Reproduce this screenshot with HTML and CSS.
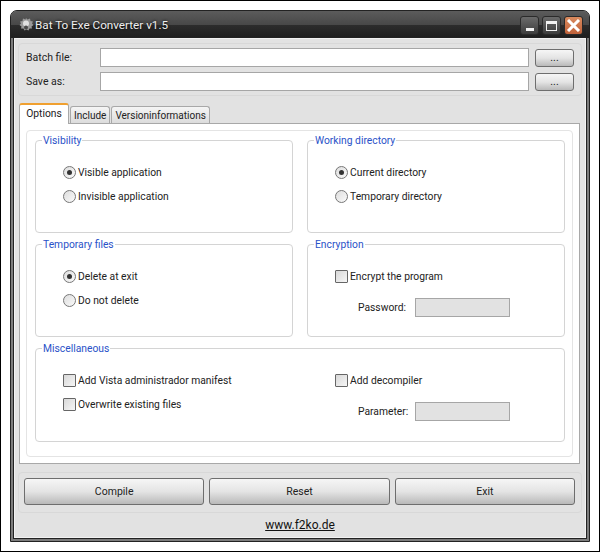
FILE: index.html
```html
<!DOCTYPE html>
<html lang="en">
<head>
    <meta charset="UTF-8">
    <title>Bat To Exe Converter v1.5</title>
    <link rel="stylesheet" href="styles.css">
</head>
<body>
    <div class="window">
        <div class="titlebar">
            <svg class="app-icon" width="16" height="15" viewBox="0 0 16 15">
                <path d="M8 1l1.500 1.500 2.500-1 .5 2.500 2.500.5-1 2 1.500 1.500-2 1.500.5 2-2.500 0-1 2-2-1-2 1-1-2-2.500 0 .5-2-2-1.500 1.500-1.500-1-2 2.500-.5.5-2.500 2.500 1z" fill="#9a9a9a"/>
                <circle cx="8" cy="6.500" r="3" fill="#e0e0e0"/>
                <circle cx="8" cy="10.500" r="2" fill="#4a4a4a"/>
            </svg>
            <span class="title">Bat To Exe Converter v1.5</span>
            <div class="win-buttons">
                <div class="win-btn"><span class="min-glyph"></span></div>
                <div class="win-btn"><span class="max-glyph"></span></div>
                <div class="win-btn close">
                    <svg width="15" height="13" viewBox="0 0 15 13">
                        <path d="M2 1l11 11M13 1L2 12" stroke="#fff" stroke-width="3" fill="none"/>
                    </svg>
                </div>
            </div>
        </div>

        <div class="content">
            <div class="group files">
                <div class="file-row">
                    <label class="file-label">Batch file:</label>
                    <div class="text-box"></div>
                    <button class="btn small">...</button>
                </div>
                <div class="file-row">
                    <label class="file-label">Save as:</label>
                    <div class="text-box"></div>
                    <button class="btn small">...</button>
                </div>
            </div>

            <div class="tabs">
                <div class="tab active">Options</div>
                <div class="tab">Include</div>
                <div class="tab">Versioninformations</div>
            </div>

            <div class="tab-panel">
                <div class="panel-inner">
                    <fieldset class="box">
                        <legend>Visibility</legend>
                        <div class="opt"><span class="radio checked"></span>Visible application</div>
                        <div class="opt"><span class="radio"></span>Invisible application</div>
                    </fieldset>
                    <fieldset class="box">
                        <legend>Working directory</legend>
                        <div class="opt"><span class="radio checked"></span>Current directory</div>
                        <div class="opt"><span class="radio"></span>Temporary directory</div>
                    </fieldset>
                    <fieldset class="box">
                        <legend>Temporary files</legend>
                        <div class="opt"><span class="radio checked"></span>Delete at exit</div>
                        <div class="opt"><span class="radio"></span>Do not delete</div>
                    </fieldset>
                    <fieldset class="box">
                        <legend>Encryption</legend>
                        <div class="opt"><span class="check"></span>Encrypt the program</div>
                        <div class="param-row"><span class="param-label">Password:</span><div class="text-box disabled"></div></div>
                    </fieldset>
                    <fieldset class="box wide">
                        <legend>Miscellaneous</legend>
                        <div class="misc-cols">
                            <div>
                                <div class="opt"><span class="check"></span>Add Vista administrador manifest</div>
                                <div class="opt"><span class="check"></span>Overwrite existing files</div>
                            </div>
                            <div>
                                <div class="opt"><span class="check"></span>Add decompiler</div>
                                <div class="param-row"><span class="param-label">Parameter:</span><div class="text-box disabled"></div></div>
                            </div>
                        </div>
                    </fieldset>
                </div>
            </div>

            <div class="group actions">
                <button class="btn">Compile</button>
                <button class="btn">Reset</button>
                <button class="btn">Exit</button>
            </div>

            <div class="footer"><a href="#">www.f2ko.de</a></div>
        </div>
    </div>
</body>
</html>
```

FILE: styles.css
```css
* {
    box-sizing: border-box;
}

html, body {
    margin: 0;
    height: 552px;
}

body {
    font-family: Roboto, Arial, sans-serif;
    font-size: 10.3px;
    color: #222;
    background: #fff;
    border: 1px solid #000;
    padding: 9px;
    overflow: hidden;
}

.window {
    width: 580px;
    height: 532px;
    background: #7c7c7c;
    border-radius: 7px 7px 0 0;
    border: 1px solid #222;
    display: flex;
    flex-direction: column;
}

.titlebar {
    height: 27px;
    flex: none;
    display: flex;
    align-items: center;
    padding: 0 6px 0 7px;
    border-radius: 6px 6px 0 0;
    background: linear-gradient(#5c5c5c, #484848 50%, #2c2c2c 52%, #1e1e1e);
}

.app-icon {
    margin-right: 1px;
}

.title {
    color: #eee;
    font-size: 11.7px;
    padding-top: 1px;
    text-shadow: 0 0 3px #000;
}

.win-buttons {
    margin-left: auto;
    display: flex;
    gap: 3px;
    align-self: flex-start;
    padding-top: 5px;
}

.win-btn {
    width: 19px;
    height: 19px;
    border: 1px solid #2a2a2a;
    border-radius: 3px;
    background: linear-gradient(#6a6a6a, #3c3c3c);
    display: flex;
    align-items: center;
    justify-content: center;
}

.win-btn.close {
    background: linear-gradient(#d98a5e, #c0623a);
}

.min-glyph {
    width: 8px;
    height: 3px;
    background: #f2f2f2;
    margin-top: 8px;
}

.max-glyph {
    width: 11px;
    height: 10px;
    border: 1px solid #f2f2f2;
    border-top-width: 3px;
}

.content {
    flex: 1;
    margin: 0 3px 3px;
    background: #e2e2e2;
    border: 1px solid #f2f2f2;
    box-shadow: 0 0 0 1px #222;
    padding: 4px 3px 0;
    display: flex;
    flex-direction: column;
}

.group {
    border: 1px solid #d8d8d8;
    border-radius: 4px;
}

.files {
    height: 53px;
    padding: 4px 7px 0 7px;
    display: flex;
    flex-direction: column;
    gap: 5px;
}

.file-row {
    height: 19px;
    display: flex;
    align-items: center;
}

.file-label {
    width: 74px;
    font-size: 10.5px;
}

.text-box {
    height: 19px;
    width: 429px;
    flex: none;
    background: #fff;
    border: 1px solid #a6a6a6;
}

.text-box.disabled {
    width: 95px;
    background: #e2e2e2;
}

.btn {
    font-family: inherit;
    font-size: 10.5px;
    color: #222;
    border: 1px solid #6e6e6e;
    border-radius: 3px;
    background: linear-gradient(#f6f6f6, #e4e4e4 50%, #b9b9b9);
    padding: 0;
}

.btn.small {
    width: 39px;
    height: 18px;
    margin-left: 6px;
    flex: none;
}

.tabs {
    display: flex;
    align-items: flex-end;
    height: 20px;
    margin-top: 7px;
    padding-left: 1px;
    gap: 1px;
}

.tab {
    height: 17px;
    line-height: 17px;
    padding: 0 3px;
    font-size: 10px;
    background: linear-gradient(#f5f5f5, #dcdcdc);
    border: 1px solid #a8a8a8;
    border-bottom: none;
    border-radius: 3px 3px 0 0;
}

.tab.active {
    height: 21px;
    line-height: 17px;
    width: 50px;
    text-align: center;
    padding: 0;
    font-size: 10.3px;
    background: #fff;
    border-color: #a8a8a8;
    border-top: 2px solid #f0a030;
    margin-bottom: -1px;
    position: relative;
}

.tab-panel {
    height: 341px;
    margin-right: 2px;
    margin-left: 1px;
    background: #fff;
    border: 1px solid #a8a8a8;
    padding: 6px;
}

.panel-inner {
    height: 100%;
    border: 1px solid #e4e4e4;
    border-radius: 4px;
    padding: 1px 9px 0 8px;
    display: grid;
    grid-template-columns: 258px 258px;
    grid-template-rows: 101px 101px 102px;
    column-gap: 14px;
    row-gap: 3px;
}

.box {
    margin: 0;
    padding: 12px 0 0 27px;
    border: 1px solid #d4d4d4;
    border-radius: 4px;
    min-width: 0;
}

.box.wide {
    grid-column: 1 / 3;
}

legend {
    color: #2a52c8;
    padding: 2px 1px 0;
    margin-left: -21px;
    line-height: 14px;
}

.opt {
    height: 24px;
    display: flex;
    align-items: center;
}

.radio {
    width: 13px;
    height: 13px;
    margin-right: 2px;
    border: 1px solid #777;
    border-radius: 50%;
    background: linear-gradient(135deg, #ddd, #fafafa);
    display: flex;
    align-items: center;
    justify-content: center;
}

.radio.checked::after {
    content: "";
    width: 5px;
    height: 5px;
    border-radius: 50%;
    background: #333;
}

.check {
    width: 13px;
    height: 13px;
    margin-right: 2px;
    border: 1px solid #666;
    border-radius: 1px;
    background: linear-gradient(135deg, #d8d8d8, #f6f6f6);
}

.param-row {
    display: flex;
    align-items: center;
    margin-top: 10px;
    padding-left: 23px;
}

.param-label {
    width: 57px;
    flex: none;
}

.misc-cols {
    display: grid;
    grid-template-columns: 272px 1fr;
}

.actions {
    height: 41px;
    margin-top: 8px;
    padding: 5px 6px 0 5px;
    display: flex;
    align-items: flex-start;
    gap: 5px;
}

.actions .btn {
    flex: 1;
    height: 27px;
}

.footer {
    flex: 1;
    text-align: center;
    font-size: 12px;
    padding-top: 5px;
}

.footer a {
    color: #111;
}
```
